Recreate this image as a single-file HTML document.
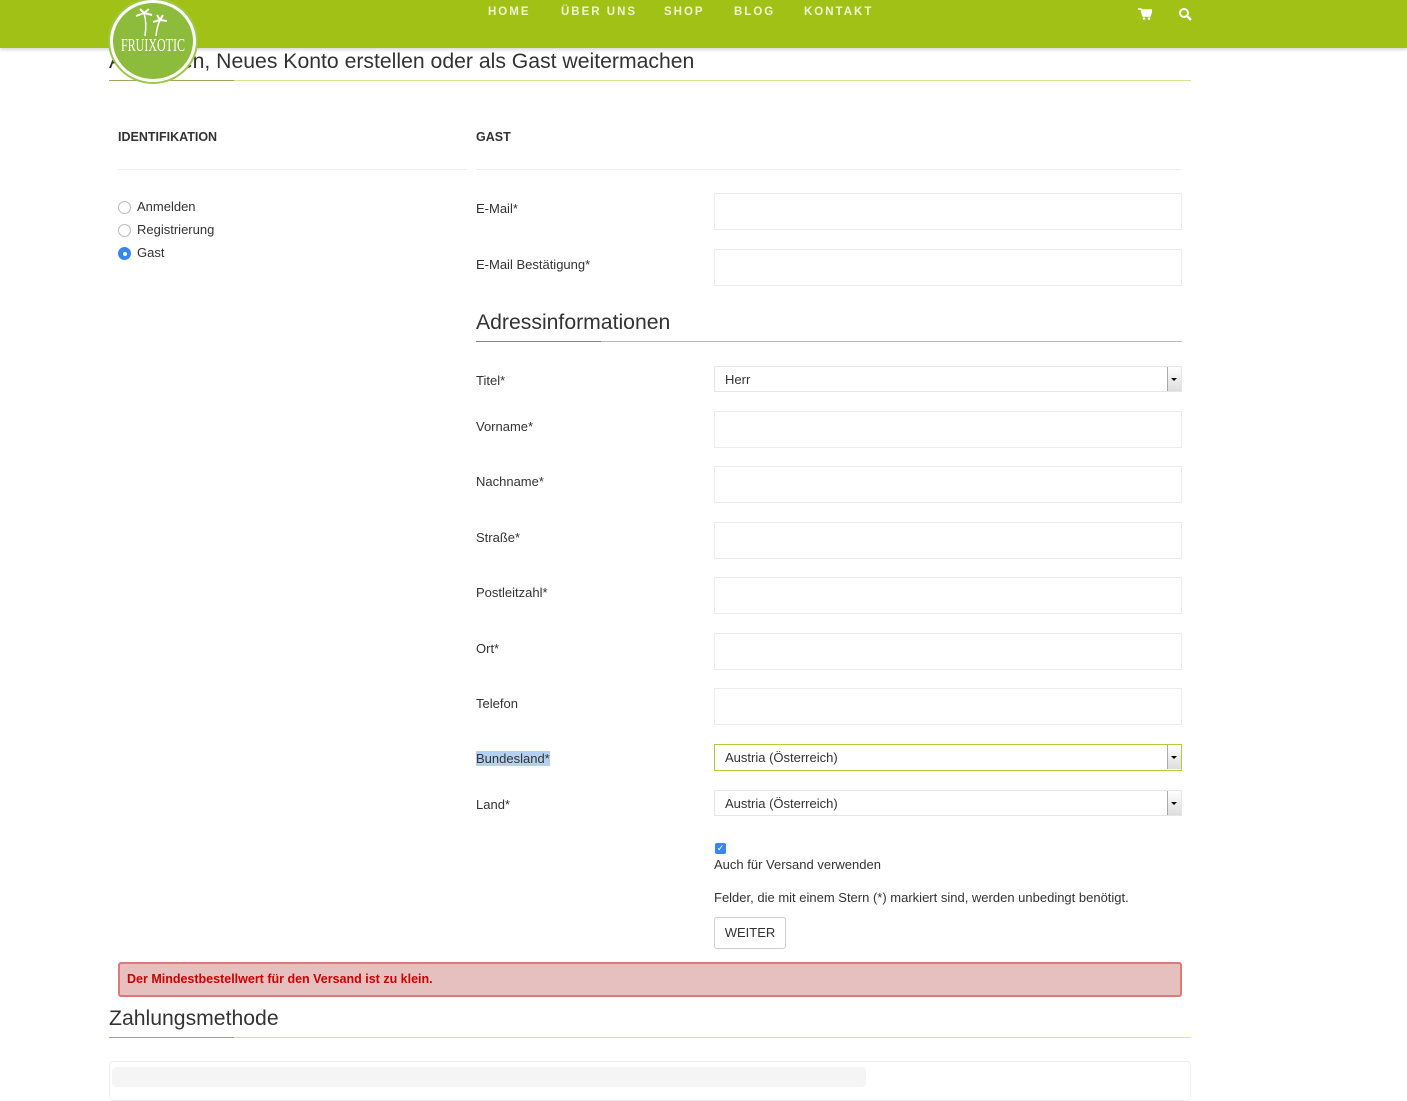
<!DOCTYPE html>
<html><head><meta charset="utf-8"><style>
*{box-sizing:border-box;margin:0;padding:0}
body{width:1407px;height:1080px;overflow:hidden;background:#fff;font-family:"Liberation Sans",sans-serif;color:#333;position:relative}
.a{position:absolute}
.hdr{left:0;top:0;width:1407px;height:48px;background:#a2c117;box-shadow:0 2px 3px rgba(0,0,0,.15)}
.nav{top:6px;font-size:11.5px;font-weight:bold;letter-spacing:2px;color:#eef5d0}
.lbl{left:476px;font-size:13px;color:#333}
.inp{left:714px;width:468px;height:37px;border:1px solid #ebebeb;background:#fff}
.sel{left:714px;width:468px;height:26px;border:1px solid #e6e6e6;font-size:13px;padding:5px 10px;color:#333}
.sel::after{content:"";position:absolute;right:0;top:0;width:13px;height:24px;border-left:1px solid #aaa;background:linear-gradient(#fff,#ddd)}
.sel i{position:absolute;right:4px;top:11px;border:3px solid transparent;border-top:3px solid #000;z-index:2}
.h2{font-size:21.2px;color:#333}
.line{height:1px;background:#d6e48f}
.line b{display:block;width:125px;height:1px;background:#9aa86a}
</style></head><body>
<div class="a hdr"></div>
<div class="a nav" style="left:488px">HOME</div>
<div class="a nav" style="left:561px">ÜBER UNS</div>
<div class="a nav" style="left:664px">SHOP</div>
<div class="a nav" style="left:734px">BLOG</div>
<div class="a nav" style="left:804px">KONTAKT</div>
<svg class="a" style="left:1138px;top:8px" width="14" height="12"><path d="M0 1h3l2 7h7l2-6H4" fill="#fff" stroke="#fff" stroke-width="1.5"/><circle cx="6" cy="10.5" r="1.3" fill="#fff"/><circle cx="11" cy="10.5" r="1.3" fill="#fff"/></svg>
<svg class="a" style="left:1178px;top:7px" width="14" height="14"><circle cx="6" cy="6" r="4" stroke="#fff" stroke-width="2" fill="none"/><path d="M9 9l4 4" stroke="#fff" stroke-width="2.5"/></svg>

<div class="a h2" style="left:109px;top:50px">Anmelden, Neues Konto erstellen oder als Gast weitermachen</div>
<div class="a line" style="left:109px;top:80px;width:1082px"><b></b></div>
<div class="a" style="left:110px;top:0;width:86px;height:82px;border-radius:50%;background:#8dbb3b;border:3px solid #fff;box-shadow:0 0 0 2px #9cc84a"></div>
<div class="a" style="left:118px;top:38px;width:70px;text-align:center;color:#fff;font-family:'Liberation Serif',serif;font-size:12px;transform:scaleY(1.5)">FRUIXOTIC</div>
<svg class="a" style="left:130px;top:8px" width="50" height="30"><path d="M15 28 Q17 15 14 5 M26 28 Q27 18 30 12" stroke="#fff" stroke-width="1.5" fill="none"/><path d="M14 5 l-8 3 M14 5 l8 2 M14 5 l-4-4 M14 5 l5-4 M30 12 l-7 2 M30 12 l7 1 M30 12 l3-5 M30 12 l-3-5" stroke="#fff" stroke-width="2"/></svg>

<div class="a" style="left:118px;top:130px;font-size:12.5px;font-weight:bold;color:#333">IDENTIFIKATION</div>
<div class="a" style="left:476px;top:130px;font-size:12.5px;font-weight:bold;color:#333">GAST</div>
<div class="a" style="left:118px;top:169px;width:349px;height:1px;background:#eee"></div>
<div class="a" style="left:476px;top:169px;width:706px;height:1px;background:#eee"></div>

<div class="a" style="left:118px;top:201px;width:13px;height:13px;border:1px solid #bbb;border-radius:50%"></div>
<div class="a" style="left:137px;top:199px;font-size:13px">Anmelden</div>
<div class="a" style="left:118px;top:224px;width:13px;height:13px;border:1px solid #bbb;border-radius:50%"></div>
<div class="a" style="left:137px;top:222px;font-size:13px">Registrierung</div>
<div class="a" style="left:118px;top:247px;width:13px;height:13px;background:#3a86f0;border-radius:50%"><div style="margin:4.5px;width:4px;height:4px;background:#fff;border-radius:50%"></div></div>
<div class="a" style="left:137px;top:245px;font-size:13px">Gast</div>

<div class="a lbl" style="top:201px">E-Mail*</div><div class="a inp" style="top:193px"></div>
<div class="a lbl" style="top:257px">E-Mail Bestätigung*</div><div class="a inp" style="top:249px"></div>
<div class="a h2" style="left:476px;top:311px">Adressinformationen</div>
<div class="a" style="left:476px;top:341px;width:706px;height:1px;background:#bbb"><b style="display:block;width:125px;height:1px;background:#888"></b></div>
<div class="a lbl" style="top:373px">Titel*</div><div class="a sel" style="top:366px">Herr<i></i></div>
<div class="a lbl" style="top:419px">Vorname*</div><div class="a inp" style="top:411px"></div>
<div class="a lbl" style="top:474px">Nachname*</div><div class="a inp" style="top:466px"></div>
<div class="a lbl" style="top:530px">Straße*</div><div class="a inp" style="top:522px"></div>
<div class="a lbl" style="top:585px">Postleitzahl*</div><div class="a inp" style="top:577px"></div>
<div class="a lbl" style="top:641px">Ort*</div><div class="a inp" style="top:633px"></div>
<div class="a lbl" style="top:696px">Telefon</div><div class="a inp" style="top:688px"></div>
<div class="a lbl" style="top:751px;background:#b4d0f2">Bundesland*</div><div class="a sel" style="top:744px;height:27px;border-color:#b5cc3b">Austria (Österreich)<i></i></div>
<div class="a lbl" style="top:797px">Land*</div><div class="a sel" style="top:790px">Austria (Österreich)<i></i></div>
<div class="a" style="left:715px;top:843px;width:11px;height:11px;background:#3a86f0;border-radius:2px;color:#fff;font-size:9px;line-height:11px;text-align:center">✓</div>
<div class="a" style="left:714px;top:857px;font-size:13px">Auch für Versand verwenden</div>
<div class="a" style="left:714px;top:890px;font-size:13px">Felder, die mit einem Stern (*) markiert sind, werden unbedingt benötigt.</div>
<div class="a" style="left:714px;top:917px;width:72px;height:32px;border:1px solid #ccc;border-radius:3px;font-size:13px;text-align:center;line-height:30px">WEITER</div>
<div class="a" style="left:118px;top:962px;width:1064px;height:35px;background:#e6bfbf;border:2px solid #e07878;border-radius:3px;color:#c00;font-size:12.5px;font-weight:bold;padding:8px 7px">Der Mindestbestellwert für den Versand ist zu klein.</div>
<div class="a h2" style="left:109px;top:1007px">Zahlungsmethode</div>
<div class="a" style="left:109px;top:1037px;width:1082px;height:1px;background:#d6e48f"><b style="display:block;width:125px;height:1px;background:#9aa86a"></b></div>
<div class="a" style="left:109px;top:1061px;width:1082px;height:40px;border:1px solid #eee;border-radius:4px"></div>
<div class="a" style="left:112px;top:1067px;width:754px;height:20px;background:#f5f5f5;border-radius:4px"></div>
</body></html>
